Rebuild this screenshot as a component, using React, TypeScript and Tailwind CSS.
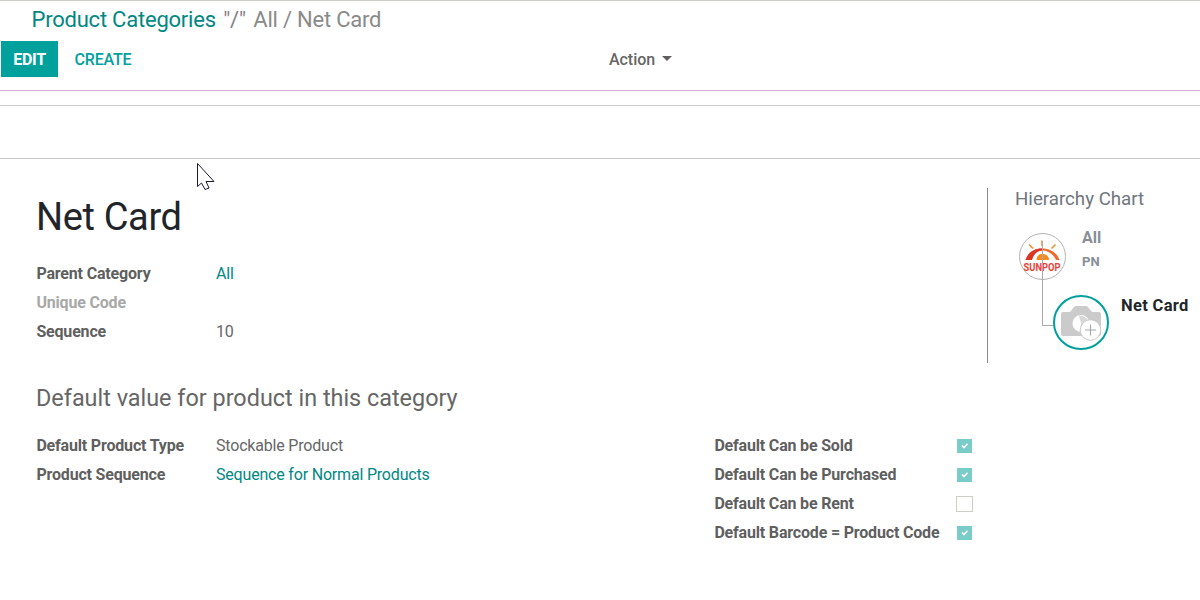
import type { ReactNode } from 'react';

function Label({ children, muted = false }: { children: ReactNode; muted?: boolean }) {
  return (
    <span className={muted ? 'pl-[0.4px] font-bold tracking-[-0.18px] text-[#a8a8a8]' : 'pl-[0.4px] font-bold tracking-[-0.18px] text-[#5f5f5f]'}>{children}</span>
  );
}

function Check({ checked }: { checked: boolean }) {
  if (!checked) {
    return <span className="ml-px block h-4 w-[17px] border border-[#c8d0c8] bg-white" />;
  }
  return (
    <span className="ml-0.5 flex h-3.5 w-[15px] items-center justify-center bg-[#7accc8]">
      <svg width="15" height="14" viewBox="0 0 15 14" fill="none" stroke="#fff" strokeWidth="1.6">
        <path d="M5 6.5 7 8.5 10.5 4.7" />
      </svg>
    </span>
  );
}

function SunpopLogo() {
  return (
    <svg width="48" height="48" viewBox="0 0 48 48" className="block">
      <circle cx="24.500" cy="23.500" r="23" fill="#fff" stroke="#aaa" strokeWidth="0.9" />
      <path d="M7.500 27C10 19.500 16 15.500 24 15.500s15 4 17.500 11.500h-3.500C35.500 21 30 17.500 24 17.500c-4 0-8 3-10 9.500z" fill="#f2692a" />
      <path d="M7.500 27C10 19.500 16 15.500 24 15.500v2c-5 0-9 4-10 9.500z" fill="#dd3427" />
      <path d="M18.500 27c0-4 2.500-6 6-6s6.500 2 6.500 6z" fill="#f58a1f" />
      <path d="M24 7.500v5.500M11 11.500l4 4M37.500 11.500l-4 4" stroke="#f58a1f" strokeWidth="1.500" />
      <text x="5.500" y="38" textLength="37" lengthAdjust="spacingAndGlyphs" fontFamily="Roboto, sans-serif" fontSize="10" fontWeight="700" fill="#ef4136">SUNPOP</text>
    </svg>
  );
}

function CameraAvatar() {
  return (
    <svg width="56" height="56" viewBox="0 0 56 56" className="block">
      <ellipse cx="28" cy="27.500" rx="27" ry="26.500" fill="#fff" stroke="#00a09d" strokeWidth="2" />
      <path d="M10 17h6q1 0 2-1l3-4q1-1 2-1h10q1 0 2 1l3 4q1 1 2 1h6q2 0 2 2v20q0 2-2 2H10q-2 0-2-2V19q0-2 2-2z" fill="#cbcbcb" />
      <circle cx="28" cy="28.500" r="8.500" fill="#fff" />
      <path d="M26 20.500c5 0 9 3 10 7l-5 8c-3-2-3-4-3-7s-2-5-2-8z" fill="#cbcbcb" opacity=".75" />
      <circle cx="37.500" cy="35" r="10.300" fill="#fff" stroke="#c8c8c8" strokeWidth="1" />
      <path d="M37.500 29.500v11M32 35h11" stroke="#aaa" strokeWidth="1.200" />
    </svg>
  );
}

const flags = [
  { name: 'Default Can be Sold', on: true },
  { name: 'Default Can be Purchased', on: true },
  { name: 'Default Can be Rent', on: false },
  { name: 'Default Barcode = Product Code', on: true },
];

export default function App() {
  return (
    <div className="relative h-[600px] w-[1200px] overflow-hidden border-t border-[#c8d0c8] bg-white font-['Roboto',sans-serif] text-base leading-[29px] text-[#666]">
      <header className="h-[90px] border-b border-[#d4b4d4]">
        <nav className="flex h-10 items-center gap-[7.5px] pb-1 pl-[31.5px] text-[22px] tracking-[-0.22px] whitespace-pre text-[#8a8a8a]">
          <span className="text-[#008784]">Product Categories</span>
          <span className="text-[#857d88]">"/"</span>
          <span>All / Net Card</span>
        </nav>
        <div className="flex h-9 items-center pl-px">
          <button className="flex h-9 w-[57px] items-center justify-center bg-[#00a09d] font-bold tracking-[-0.3px] text-white">EDIT</button>
          <button className="ml-4 w-[58px] font-medium tracking-[-0.2px] text-[#00a09d]">CREATE</button>
          <button className="ml-[477px] flex items-center gap-[7px] font-medium tracking-[-0.05px] text-[#666]">
            Action
            <svg width="10" height="5" viewBox="0 0 10 5" fill="#5f5f5f" className="-mt-0.5"><path d="M0 0h10L5 5z" /></svg>
          </button>
        </div>
      </header>
      <div className="h-[15px] border-b border-[#d2c6d2]" />
      <div className="h-[53px] border-b border-[#c6c6c6]" />

      <main className="flex pt-[29px]">
        <section className="w-[987px] pl-9">
          <h1 className="mt-[7px] h-16 text-[38px] leading-[44px] tracking-[-0.35px] text-[#212529]">Net Card</h1>
          <div className="grid grid-cols-[180px_1fr] tracking-[-0.19px]">
            <Label>Parent Category</Label>
            <span className="text-[#008784]">All</span>
            <Label muted>Unique Code</Label>
            <span />
            <Label>Sequence</Label>
            <span>10</span>
          </div>
          <h2 className="mt-[38px] h-[47px] text-[23.4px] leading-[29px] text-[#666]">Default value for product in this category</h2>
          <div className="flex">
            <div className="grid w-[678px] grid-cols-[180px_1fr] content-start tracking-[-0.19px]">
              <Label>Default Product Type</Label>
              <span>Stockable Product</span>
              <Label>Product Sequence</Label>
              <span className="text-[#008784]">Sequence for Normal Products</span>
            </div>
            <div className="w-[259px]">
              {flags.map((flag) => (
                <div key={flag.name} className="flex h-[29px] items-center">
                  <span className="w-[241px] shrink-0 whitespace-nowrap"><Label>{flag.name}</Label></span>
                  <Check checked={flag.on} />
                </div>
              ))}
            </div>
          </div>
        </section>

        <aside className="h-[175px] w-[213px] border-l border-[#8c8c8c] pl-[27px]">
          <h3 className="h-[45px] text-[18.7px] leading-[22px] text-[#70767e]">Hierarchy Chart</h3>
          <div className="relative flex pl-[3px]">
            <SunpopLogo />
            <div className="-mt-[5px] ml-4 flex flex-col font-bold text-[#868e96]">
              <span className="leading-5">All</span>
              <span className="mt-1 text-[13px] leading-5">PN</span>
            </div>
            <span className="absolute top-2 left-[27px] h-[85px] w-3 border-b border-l border-[#aaa]" />
          </div>
          <div className="relative mt-3.5 flex pl-[38px]">
            <CameraAvatar />
            <span className="mt-px ml-3 text-[16.5px] leading-5 font-bold tracking-[0.32px] whitespace-nowrap text-[#212529]">Net Card</span>
          </div>
        </aside>
      </main>

      <svg className="absolute top-[161px] left-[196px]" width="20" height="30" viewBox="0 0 20 30" fill="#fff" stroke="#1c1c30">
        <path d="M1.500 1.500v23l4-3.500 3.500 6.500 4-1.500-3-6.500h8z" />
      </svg>
    </div>
  );
}
